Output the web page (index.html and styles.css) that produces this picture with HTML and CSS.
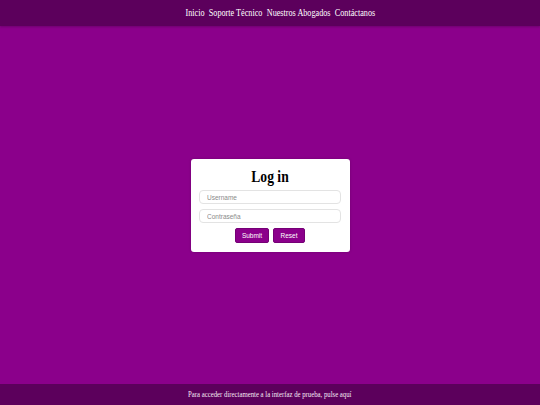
FILE: index.html
```html
<!DOCTYPE html>
<html>
<head>
<meta charset="utf-8">
<link rel="stylesheet" href="styles.css">
</head>
<body>
<header class="topbar">
  <nav class="nav">
    <a href="#">Inicio</a>
    <a href="#">Soporte Técnico</a>
    <a href="#">Nuestros Abogados</a>
    <a href="#">Contáctanos</a>
  </nav>
</header>
<main class="main">
  <form class="card">
    <h1 class="title">Log in</h1>
    <input class="field" type="text" placeholder="Username">
    <input class="field" type="password" placeholder="Contraseña">
    <div class="actions">
      <button class="btn btn-submit" type="button">Submit</button>
      <button class="btn btn-reset" type="button">Reset</button>
    </div>
  </form>
</main>
<footer class="footer"><span class="footer-text">Para acceder directamente a la interfaz de prueba, pulse aquí</span></footer>
</body>
</html>
```
FILE: styles.css
```css
html, body {
  margin: 0;
  padding: 0;
  height: 100%;
}
body {
  display: flex;
  flex-direction: column;
  background: #8b008b;
  font-family: "Liberation Serif", "Times New Roman", serif;
}
.topbar {
  height: 26px;
  box-sizing: border-box;
  padding-left: 20px;
  background: #5c005c;
  display: flex;
  justify-content: center;
  align-items: center;
  box-shadow: 0 1px 2px rgba(0,0,0,0.2);
}
.nav {
  display: flex;
  gap: 5px;
  font-size: 9.5px;
  padding-bottom: 1px;
  transform: scaleX(0.86);
}
.nav a {
  color: #ffffff;
  text-decoration: none;
}
.main {
  flex: 1;
  display: flex;
  justify-content: center;
  align-items: center;
  padding-top: 1px;
}
.card {
  width: 159px;
  box-sizing: border-box;
  background: #fff;
  border-radius: 3px;
  padding: 6px 8px 9px;
  display: flex;
  flex-direction: column;
  align-items: center;
  box-shadow: 0 0 3px rgba(0,0,0,0.2);
}
.title {
  margin: 2px 0 3px;
  font-size: 16px;
  font-weight: bold;
  line-height: 20px;
  color: #000;
  transform: scaleX(0.85);
}
.field {
  width: 142px;
  box-sizing: border-box;
  height: 14px;
  margin: 0 0 5px;
  border: 1px solid #e3e3e3;
  border-radius: 4px;
  padding: 0 7px;
  font-family: "Liberation Sans", Arial, sans-serif;
  font-size: 6.5px;
  outline: none;
}
.field::placeholder {
  color: #8a8a8a;
}
.actions {
  display: flex;
  gap: 4px;
}
.btn {
  height: 15px;
  padding: 0;
  background: #8b008b;
  color: #fff;
  border: 1px solid #760076;
  border-radius: 2px;
  font-family: "Liberation Sans", Arial, sans-serif;
  font-size: 6.5px;
}
.btn-submit { width: 34px; }
.btn-reset { width: 32px; }
.footer {
  height: 21px;
  background: #5c005c;
  color: #f4e8f4;
  font-size: 7.5px;
  display: flex;
  justify-content: center;
  align-items: center;
}
.footer-text {
  transform: scaleX(0.9);
}
```
